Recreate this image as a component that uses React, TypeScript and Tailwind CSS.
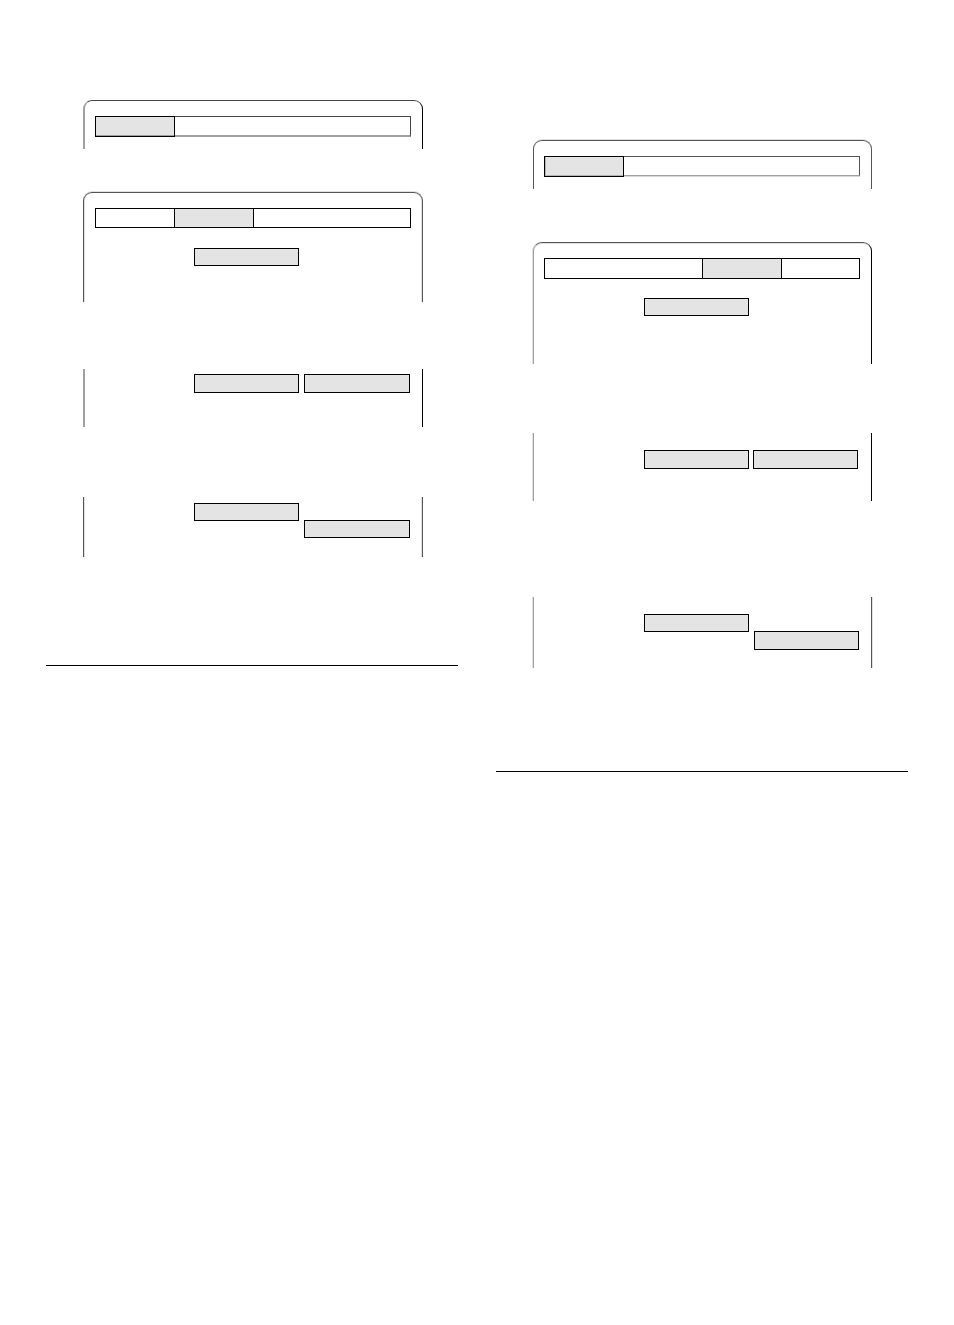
import type { ReactNode } from "react";

function Frame({ className, children }: { className: string; children?: ReactNode }) {
  return <section className={`flex flex-col ${className}`}>{children}</section>;
}

function Chip({ className = "h-[18px] w-[105px]" }: { className?: string }) {
  return <div className={`shrink-0 border border-black bg-[#e4e4e4] ${className}`} />;
}

export default function App() {
  return (
    <main className="grid min-h-screen grid-cols-2 items-start gap-[38px] bg-white px-[46px]">
      <div className="flex flex-col pt-[100px]">
        <Frame className="ml-[37px] mr-[35px] h-[49px] rounded-t-[9px] border-l-2 border-r border-t border-l-[#a0a0a0] border-r-black border-t-[#444] pl-[10px] pr-[11px] pt-[15px]">
          <div className="flex h-[21px]">
            <div className="w-[80px] border border-black bg-[#e4e4e4] shadow-[inset_0_-1px_0_#a0a0a0]" />
            <div className="flex-1 border-b-2 border-r border-t border-b-[#a0a0a0] border-r-[#444] border-t-[#444]" />
          </div>
        </Frame>

        <Frame className="ml-[37px] mr-[35px] mt-[43px] h-[110px] rounded-t-[9px] border-x border-t border-[#555] px-[11px] pt-[15px] shadow-[0_-1px_0_#e0e0e0,inset_1px_0_0_#e0e0e0,inset_-1px_0_0_#e0e0e0]">
          <div className="flex h-[20px] border border-black">
            <div className="w-[78px]" />
            <div className="w-[80px] border-x border-black bg-[#e4e4e4]" />
          </div>
          <Chip className="ml-[99px] mt-[20px] h-[18px] w-[105px]" />
        </Frame>

        <Frame className="ml-[37px] mr-[35px] mt-[67px] h-[58px] border-l-2 border-r border-l-[#a0a0a0] border-r-black pl-[109px] pt-[5px]">
          <div className="flex gap-[5px]">
            <Chip className="h-[19px] w-[105px]" />
            <Chip className="h-[19px] w-[106px]" />
          </div>
        </Frame>

        <Frame className="ml-[37px] mr-[35px] mt-[70px] h-[60px] border-x border-[#555] pl-[110px] pt-[6px] shadow-[inset_1px_0_0_#e0e0e0,inset_-1px_0_0_#e0e0e0]">
          <div className="flex gap-[5px]">
            <Chip />
            <Chip className="mt-[17px] h-[18px] w-[106px]" />
          </div>
        </Frame>

        <hr className="mt-[108px] border-t border-black" />
      </div>

      <div className="flex flex-col pt-[140px]">
        <Frame className="ml-[37px] mr-[36px] h-[49px] rounded-t-[9px] border-x border-t border-[#555] pl-[10px] pr-[11px] pt-[15px] shadow-[0_-1px_0_#e0e0e0]">
          <div className="flex h-[21px]">
            <div className="w-[80px] border border-black bg-[#e4e4e4] shadow-[inset_1px_-1px_0_#b4b4b4]" />
            <div className="mb-px flex-1 border-b border-r border-t border-b-[#a0a0a0] border-r-[#555] border-t-[#555] shadow-[0_1px_0_#d8d8d8]" />
          </div>
        </Frame>

        <Frame className="ml-[37px] mr-[36px] mt-[53px] h-[122px] rounded-t-[9px] border-x border-t border-l-[#a0a0a0] border-r-black border-t-[#555] pl-[10px] pr-[11px] pt-[15px] shadow-[inset_0_1px_0_#e0e0e0,-1px_0_0_#e0e0e0]">
          <div className="flex h-[21px] border border-black">
            <div className="w-[157px]" />
            <div className="w-[80px] border-x border-black bg-[#e4e4e4]" />
          </div>
          <Chip className="ml-[100px] mt-[19px] h-[18px] w-[105px]" />
        </Frame>

        <Frame className="ml-[37px] mr-[36px] mt-[69px] h-[68px] border-x border-l-[#a0a0a0] border-r-black pl-[110px] pt-[17px] shadow-[-1px_0_0_#e0e0e0]">
          <div className="flex gap-[4px]">
            <Chip className="h-[19px] w-[105px]" />
            <Chip className="h-[19px] w-[105px]" />
          </div>
        </Frame>

        <Frame className="ml-[37px] mr-[36px] mt-[96px] h-[71px] border-x border-l-[#a0a0a0] border-r-[#555] pl-[110px] pt-[17px] shadow-[-1px_0_0_#e0e0e0,1px_0_0_#e0e0e0]">
          <div className="flex gap-[5px]">
            <Chip />
            <Chip className="mt-[17px] h-[19px] w-[105px]" />
          </div>
        </Frame>

        <hr className="mt-[103px] border-t border-black" />
      </div>
    </main>
  );
}
